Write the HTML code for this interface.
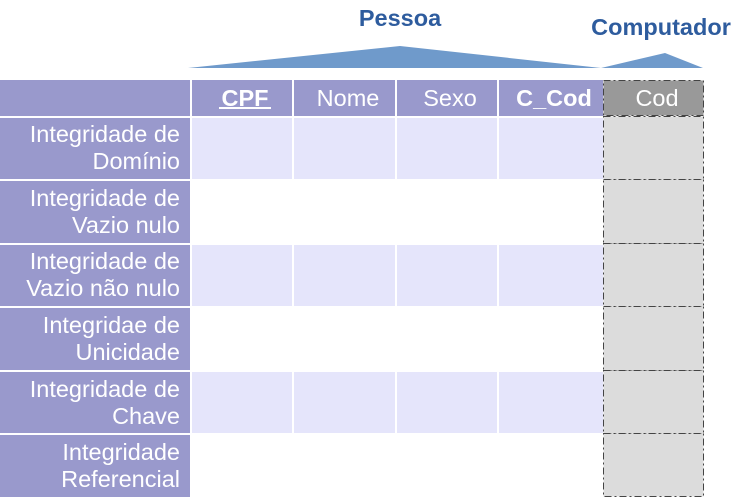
<!DOCTYPE html>
<html><head><meta charset="utf-8"><style>
html,body{margin:0;padding:0;background:#fff;width:741px;height:498px;overflow:hidden}
svg{display:block}
text{font-family:"Liberation Sans",sans-serif}
</style></head><body>
<svg width="741" height="498" viewBox="0 0 741 498">
<text x="400" y="26" font-size="23.5" font-weight="bold" fill="#2e5c9e" text-anchor="middle">Pessoa</text>
<text x="661" y="35" font-size="23.5" font-weight="bold" fill="#2e5c9e" text-anchor="middle">Computador</text>
<polygon points="188,68 400,46 601,68" fill="#6f9acb"/>
<polygon points="601,68 665,53 703,68" fill="#6f9acb"/>
<!-- header -->
<rect x="0" y="80" width="603" height="36" fill="#9999cc"/>
<g fill="#fff">
<rect x="190" y="80" width="2" height="418"/>
<rect x="292" y="80" width="2" height="418"/>
<rect x="395" y="80" width="2" height="418"/>
<rect x="497" y="80" width="2" height="418"/>
</g>
<g>
<rect x="0" y="118" width="190" height="61" fill="#9999cc"/>
<rect x="0" y="181" width="190" height="62" fill="#9999cc"/>
<rect x="0" y="245" width="190" height="61" fill="#9999cc"/>
<rect x="0" y="308" width="190" height="62" fill="#9999cc"/>
<rect x="0" y="372" width="190" height="61" fill="#9999cc"/>
<rect x="0" y="435" width="190" height="62" fill="#9999cc"/>
<rect x="192" y="118" width="411" height="61" fill="#e5e5fb"/>
<rect x="192" y="245" width="411" height="61" fill="#e5e5fb"/>
<rect x="192" y="372" width="411" height="61" fill="#e5e5fb"/>
</g>
<g fill="#fff">
<rect x="292" y="116" width="2" height="63"/><rect x="395" y="116" width="2" height="63"/><rect x="497" y="116" width="2" height="63"/>
<rect x="292" y="243" width="2" height="63"/><rect x="395" y="243" width="2" height="63"/><rect x="497" y="243" width="2" height="63"/>
<rect x="292" y="370" width="2" height="63"/><rect x="395" y="370" width="2" height="63"/><rect x="497" y="370" width="2" height="63"/>
</g>
<rect x="603.5" y="80.5" width="100" height="35" fill="#999" stroke="#444" stroke-dasharray="7,3,2,3"/>
<g fill="#dcdcdc" stroke="#444" stroke-dasharray="7,3,2,3">
<rect x="603.5" y="116.5" width="100" height="63"/>
<rect x="603.5" y="179.5" width="100" height="64"/>
<rect x="603.5" y="243.5" width="100" height="63"/>
<rect x="603.5" y="306.5" width="100" height="64"/>
<rect x="603.5" y="370.5" width="100" height="63"/>
<rect x="603.5" y="433.5" width="100" height="63"/>
</g>
<g font-size="23.5" fill="#fff" text-anchor="middle">
<text x="245" y="106" font-weight="bold">CPF</text>
<rect x="219" y="107" width="52" height="2" fill="#fff"/>
<text x="348" y="106">Nome</text>
<text x="450" y="106">Sexo</text>
<text x="554" y="106" font-weight="bold">C_Cod</text>
<text x="657" y="106">Cod</text>
</g>
<g font-size="23.5" fill="#fff" text-anchor="end">
<text x="180" y="142">Integridade de</text><text x="180" y="169">Domínio</text>
<text x="180" y="206">Integridade de</text><text x="180" y="233">Vazio nulo</text>
<text x="180" y="269">Integridade de</text><text x="180" y="296">Vazio não nulo</text>
<text x="180" y="333">Integridae de</text><text x="180" y="360">Unicidade</text>
<text x="180" y="397">Integridade de</text><text x="180" y="424">Chave</text>
<text x="180" y="460">Integridade</text><text x="180" y="487">Referencial</text>
</g>
</svg>
</body></html>
